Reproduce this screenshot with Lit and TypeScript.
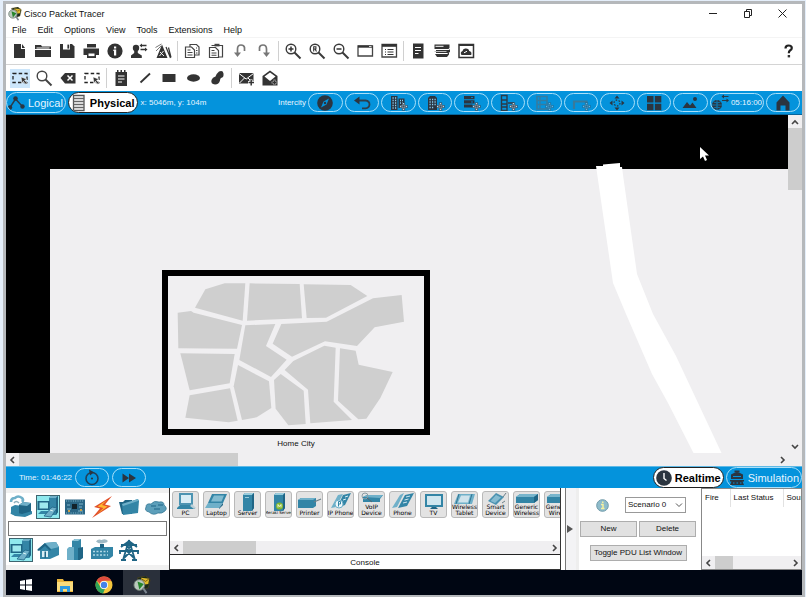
import { LitElement, html, svg, css, type TemplateResult } from "lit";
import { customElement, property } from "lit/decorators.js";
import { classMap } from "lit/directives/class-map.js";

type Art = TemplateResult;

const plus = svg`<path d="M13.500 15.500h8M17.500 11.500v8" stroke="#3b4652" stroke-width="3.200"/><path d="M14 15.500h7M17.500 12v7" stroke="#b5dcf2" stroke-width="1.500"/><path d="M15 15.500h5M17.500 13v5" stroke="#3b4652" stroke-width=".7"/>`;

/* Toolbar glyphs, 24 x 24 */
const glyphs: Record<string, Art> = {
  file: svg`<path d="M7 5h7v5h4v9H7z"/><path d="M15 5l3 4h-3z"/>`,
  folder: svg`<path d="M4 6h6l1 1.500h9V10H4z"/><path d="M5.500 9h13" stroke="#fff" stroke-width="1"/><path d="M4 11h16v7H4z"/>`,
  save: svg`<path d="M5 5h12l2.500 2.500V19H5z"/><path d="M8 5h7v5.500H8z" fill="#fff"/><path d="M12.400 5.600h1.800v4h-1.800z"/>`,
  print: svg`<path d="M8 5h9v3.400H8zM4.500 9.500h15.500V16H4.500zM8 14h9v5H8z"/><path d="M9.500 14.500h6v2.600h-6z" fill="#fff"/>`,
  info: svg`<circle cx="12" cy="12" r="7.600"/><path d="M11 7.500h2.200v2H11zM10.600 10.600h2.600V16.600H11v-4.500h-.8z" fill="#fff"/>`,
  user: svg`<circle cx="9" cy="9" r="3.200"/><path d="M7.200 10h3.600v4l4 2.500V19H4v-2.500l3.200-2.500z"/><path d="M14.500 6.500h5M13.500 10.500h5" stroke="#333" stroke-width="1.300"/><path d="M12.500 6.500l2.500-2v4zM20.500 10.500l-2.500-2v4z"/>`,
  tower: svg`<path d="M11 5.500L16.500 19H5.500z"/><path d="M15 8l4.500 11M17.500 8.500l2.500 10" stroke="#333" stroke-width="1.200"/><path d="M4.500 8.500l6-3.500M5 12l5-5" stroke="#777" stroke-width="1"/><path d="M9 13l4 4M12.500 12l-4 5" stroke="#fff" stroke-width=".9"/>`,
  copy: svg`<g fill="#fff" stroke="#444" stroke-width="1.200"><path d="M10 5.500h6.500l2.500 2.500v8h-9z"/><path d="M5.500 8h6l3 3v7.500h-9z"/></g><path d="M7.500 11h3M7.500 13.500h5M7.500 16h5M16 9h1M16 11.500h1.500M16 14h1.500" stroke="#444" stroke-width="1.100"/>`,
  paste: svg`<g fill="#fff" stroke="#444" stroke-width="1.200"><path d="M7.500 6.500h11V18H9"/><path d="M5.500 8.500h6l3 3v7h-9z"/></g><path d="M10.500 4.800h5v2.600h-5z" fill="#444"/><path d="M7.500 11.500h3M7.500 14h5M7.500 16.300h5" stroke="#444" stroke-width="1.100"/>`,
  undo: svg`<path d="M16.500 12V8.500Q16 6 13 6Q9.500 6 9.500 10v5" fill="none" stroke="#777" stroke-width="1.700"/><path d="M6 13.500h7L9.500 18z" fill="#777"/>`,
  redo: svg`<path d="M7.500 12V8.500Q8 6 11 6Q14.500 6 14.500 10v5" fill="none" stroke="#777" stroke-width="1.700"/><path d="M18 13.500h-7l3.500 4.500z" fill="#777"/>`,
  zoomIn: svg`<circle cx="10" cy="10" r="4.800" fill="none" stroke="#3a3a3a" stroke-width="1.400"/><path d="M13.500 13.500l6 6" stroke="#3a3a3a" stroke-width="2"/><path d="M7.500 10h5M10 7.500v5" stroke="#333" stroke-width="1.500"/>`,
  zoomReset: svg`<circle cx="10" cy="10" r="4.800" fill="none" stroke="#3a3a3a" stroke-width="1.400"/><path d="M13.500 13.500l6 6" stroke="#3a3a3a" stroke-width="2"/><path d="M8.700 12.600V7.800h2.200v2.200H8.700M10 10l1.500 2.600" fill="none" stroke="#333" stroke-width="1.100"/>`,
  zoomOut: svg`<circle cx="10" cy="10" r="4.800" fill="none" stroke="#3a3a3a" stroke-width="1.400"/><path d="M13.500 13.500l6 6" stroke="#3a3a3a" stroke-width="2"/><path d="M7.500 10h5" stroke="#333" stroke-width="1.500"/>`,
  window: svg`<path d="M5 7h14.500v10H5z" fill="#fff" stroke="#444" stroke-width="1.300"/><path d="M5 6.500h14.500v2.200H5z"/><path d="M16 7.500h2.500" stroke="#fff" stroke-width=".8"/>`,
  list: svg`<path d="M5 5.500h14.500V18H5z" fill="#fff" stroke="#444" stroke-width="1.300"/><path d="M5 5h14.500v2.800H5z"/><path d="M8 10.500h1M10.500 10.500h6M8 13h1M10.500 13h6M8 15.500h1M10.500 15.500h6" stroke="#333" stroke-width="1.200"/>`,
  doc: svg`<path d="M7 4.500h10.500v15H7z"/><path d="M9 8.500h6M9 11.500h6M9 14.500h3.500" stroke="#fff" stroke-width="1.200"/>`,
  stack: svg`<path d="M4.500 5.500h15V9l-1 1h-14zM6 11h13l1-1v3l-2 1H6zM5 15h12l2-1.500v2L17 18H7z"/><path d="M5.500 7.300h8" stroke="#fff" stroke-width="1"/><path d="M4.500 12.500h12" stroke="#bbb" stroke-width="1"/>`,
  cloud: svg`<path d="M5 5.500h14.500v13H5z" fill="#fff" stroke="#333" stroke-width="1.500"/><path d="M5 5h14.500v2H5z"/><path d="M7.500 16q-1.800-2.800 1-4q.5-3 3.500-2.500q3 .2 3.200 2.500q3 .7 2 4z"/><path d="M10 13.800l3-1.500" stroke="#fff" stroke-width="1"/>`,
  marquee: svg`<path d="M5 7.500h14v9H5z" fill="none" stroke="#222" stroke-width="1.300" stroke-dasharray="3.500 2.200"/><path d="M13 11l6 2.200-2.400 1.100 2.600 3-1.300 1-2.500-3-1.300 2z" stroke="#fff" stroke-width=".5"/>`,
  lens: svg`<circle cx="10" cy="10" r="4.800" fill="none" stroke="#444" stroke-width="1.400"/><path d="M13.500 13.500l6 6" stroke="#444" stroke-width="2"/>`,
  erase: svg`<path d="M4.500 12L9 7h10.500v10.500H9z"/><path d="M11.500 9.500l5 5M16.500 9.500l-5 5" stroke="#fff" stroke-width="1.500"/>`,
  note: svg`<path d="M6.500 6h11.500v14H6.500zM8 4h1.500v3H8zM11.500 4H13v3h-1.500zM15 4h1.500v3H15z"/><path d="M9 10h6.500M9 13h6.500M9 16h4" stroke="#fff" stroke-width="1.200"/>`,
  line: svg`<path d="M7.500 16.500L17 7.500" stroke="#333" stroke-width="1.800"/>`,
  rect: svg`<path d="M5.500 8h13v8h-13z"/>`,
  ellipse: svg`<ellipse cx="12.500" cy="12" rx="6.500" ry="3.700"/>`,
  blob: svg`<path d="M14 5.500q4-1.500 4.500 2q.5 4-2.500 4.500q-1 .5-1 2.500q-1 4-5 4q-4.500-.5-3.500-4.500q1-3 4-3.500q1.500-3.500 3.500-5z"/>`,
  mail: svg`<path d="M5 7h14.500v10.500H5z"/><path d="M5 7.500l7.200 5.500 7.300-5.500M5.500 17l5-5M19 17l-5-5" stroke="#fff" stroke-width="1" fill="none"/><path d="M14 16.500h6M17 13.500v6" stroke="#fff" stroke-width="3.200"/><path d="M14.500 16.500h5.500M17.200 14v5.500" stroke="#333" stroke-width="1.500"/>`,
  mailOpen: svg`<path d="M4.500 10L12 4.500 19.500 10v9.500h-15z"/><path d="M6.500 10.500L12 6.500l5.500 4-5.500 4.500z" fill="#fff"/><path d="M13.500 16.500h6M16.500 13.500v6" stroke="#999" stroke-width="2.200"/><path d="M14.500 16.500h4M16.500 14.500v4" stroke="#333" stroke-width="1"/>`,
  help: svg`<path d="M9.500 9.500Q9.500 6.500 12.500 6.500Q15.800 6.500 15.800 9Q15.800 10.500 14 11.500Q12.800 12.300 12.800 14.200" fill="none" stroke="#222" stroke-width="2.200"/><path d="M11.700 16h2.400v2.400h-2.400z"/>`,

  compass: svg`<circle cx="12" cy="12" r="7.800"/><path d="M16 7.500l-2.500 6-5.500 3 2.500-6z" fill="#0493dc"/><circle cx="12" cy="12" r="1.200"/>`,
  back: svg`<path d="M7 9.500h8.500q4 .3 4 4q-.2 3.500-4 3.800h-3.500" fill="none" stroke="#2c3e4c" stroke-width="1.800"/><path d="M4 9.500L9.500 5.500v8z"/>`,
  city: svg`<path d="M5 5h6.500v14H5zM12.500 7.500h6V17h-6z"/><path d="M6.500 7h1.200M9 7h1.200M6.500 9.500h1.200M9 9.500h1.200M6.500 12h1.200M9 12h1.200M6.500 14.500h1.200M9 14.500h1.200M14 9.500h1M16 9.500h1M14 12h1M16 12h1M6.500 17h1.200M9 17h1.200" stroke="#8dcdf0" stroke-width="1.500"/>${plus}`,
  building: svg`<path d="M5 7l2-2h5l2 2v12H5z"/><path d="M6.500 8.500h1.200M9 8.500h1.200M11.500 8.500h1.200M6.500 11h1.200M9 11h1.200M11.500 11h1.200M6.500 13.500h1.200M9 13.500h1.200M11.500 13.500h1.200M6.500 16.500h1.200M9 16.500h1.200" stroke="#8dcdf0" stroke-width="1.400"/>${plus}`,
  closet: svg`<path d="M5 5h10.500v3.200H5zM5 9.300h10.500v3.200H5zM5 13.600h8.500v3H5z"/><path d="M12 6.500h2M12 11h2" stroke="#0493dc" stroke-width=".8"/>${plus}`,
  rack: svg`<path d="M5.500 4.500h5.500v15H5.500z" fill="none" stroke="#2b3b48" stroke-width="1.400"/><path d="M5.500 9h5.500M5.500 13h5.500M5.500 16h5.500M12 12h6" stroke="#2b3b48" stroke-width="1.300"/>${plus}`,
  rackDim: svg`<g opacity=".5"><path d="M5 5.500h10V18H5z" fill="none" stroke="#666" stroke-width="1.600"/><path d="M5 9.500h10M5 13.500h10M8 5.500V18" stroke="#666" stroke-width="1.300"/>${plus}</g>`,
  tableDim: svg`<g opacity=".55"><path d="M5 18V10.500h12.500V14" fill="none" stroke="#666" stroke-width="2.200"/>${plus}</g>`,
  move: svg`<path d="M12 4.500l2.500 3h-5zM12 19.500l2.500-3h-5zM4.500 12l3-2.500v5zM19.500 12l-3-2.500v5z"/><circle cx="12" cy="12" r="3" fill="none" stroke="#2b3b48" stroke-width="1.300" stroke-dasharray="1.600 1.500"/>`,
  grid: svg`<path d="M5 5h6.500v6.500H5zM12.800 5h6.500v6.500h-6.500zM5 12.800h6.500v6.500H5zM12.800 12.800h6.500v6.500h-6.500z"/>`,
  scene: svg`<path d="M4.500 17l4.500-6 3 3.500 2.500-3 4 5.500z"/><circle cx="17" cy="8" r="2"/>`,
  globe: svg`<circle cx="8" cy="14" r="5"/><path d="M3 14h10M8 9v10M4.500 11q3.500 2 7 0M4.500 17q3.500-2 7 0" stroke="#0493dc" stroke-width=".7" fill="none"/><path d="M14 5.500h5.500M13 9.500h5.500" stroke="#2b3b48" stroke-width="1.200"/><path d="M12.500 5.500L15 3.500v4zM20 9.500l-2.500-2v4z"/>`,
  home: svg`<path d="M5.500 11.500L12 4.500l6.500 7V19.500H14.500v-5h-5v5H5.500z"/>`,
  logical: svg`<path d="M5 16.500L10.500 8 17 15" fill="none" stroke="#2b3b48" stroke-width="1.400"/><circle cx="5" cy="16.500" r="2.200"/><circle cx="10.500" cy="7.500" r="2.300"/><circle cx="17.500" cy="15.500" r="2.200"/>`,
  physical: svg`<path d="M6.500 4.500h10.500v15H6.500z" fill="#fff" stroke="#555" stroke-width="1.300"/><path d="M6.500 7.500h10.500M6.500 10.500h10.500M6.500 13.500h10.500M6.500 16.500h10.500" stroke="#666" stroke-width="1.300"/>`,
  reset: svg`<circle cx="12" cy="12.500" r="6" fill="none" stroke="#20405a" stroke-width="1.600"/><path d="M9 3.500l5 2.700-4 3.300z"/><circle cx="12" cy="12.500" r="1.100"/>`,
  forward: svg`<path d="M5.500 7.500l6.500 4.500-6.500 4.500zM12 7.500l7 4.500-7 4.500z"/>`,
  clock: svg`<circle cx="12" cy="12" r="7.800"/><path d="M12 7v5.500l2.500 2" fill="none" stroke="#fff" stroke-width="1.400"/>`,
  sim: svg`<path d="M9.500 4.500h5v2h-5zM6 8.500Q12 4.500 18 8.500V13H6zM5 14h14v1.500H5zM6.500 15.500h11l1.500 3.500H5z"/><path d="M8 10.500h8M8 17h1.500M11.500 17H13M15 17h1.500" stroke="#0493dc" stroke-width="1.100"/>`,
};

const B = "#3385a6";
const L = "#6fb0c9";
const D = "#1f6585";

/* Device drawings, 24 x 24 */
const devices: Record<string, Art> = {
  network: svg`<path d="M2 12l4-2 7 1v8l-4 2-7-2z" fill="${B}"/><path d="M10 10l4-3 8 1v9l-4 4-8-1z" fill="${D}"/><path d="M10 10l4-3 8 1-4 3z" fill="${L}"/><path d="M2 7q0-4 4-4q3-3 7 0q2 2 0 4" fill="none" stroke="${L}" stroke-width="2.600"/><path d="M5 8q2-3 5 0" fill="none" stroke="#8fb0bd" stroke-width="1.500"/><path d="M1 18l5 3 10 1 7-3v-3l-10 3-8-2z" fill="${B}"/>`,
  end: svg`<path d="M13 3l2-2h7v16l-2 3h-7z" fill="${B}"/><path d="M13 3l2-2h7l-2 2z" fill="${L}"/><path d="M20 3l2-2v16l-2 3z" fill="${D}"/><path d="M1.500 6h12v9h-12z" fill="${D}"/><path d="M3.500 7.500h8.500v6H3.500z" fill="#9ee9ee"/><path d="M2 19l3-3h8l-1 3z" fill="${B}"/><path d="M8 21l8-9 5 1-6 9z" fill="${L}" stroke="${D}" stroke-width=".8"/><path d="M14 15l3 1" stroke="#d8f5f7"/>`,
  board: svg`<path d="M2 4.500h20v15H2z" fill="#2a6584"/><path d="M3 6h18M3 18h18" stroke="#86bed2" stroke-width="1" stroke-dasharray="1 1.300"/><path d="M9 9h5v5H9z" fill="#12222b"/><path d="M16 9h4M16 12h3M4 10h3M4 14h4M15 16h5" stroke="#7fb6cb" stroke-width="1"/><path d="M5 15h2v2H5zM17 14h2v2h-2z" fill="#c9a04a"/>`,
  bolt: svg`<path d="M22 1L4 12l6 1.500L2 23l19-12-6-1.500z" fill="#e2502a"/><path d="M17 5L7.500 11.500l6 1.500L7 19l10.500-7.500-5.500-1.500z" fill="#ffb52d"/>`,
  folder: svg`<path d="M2 7h4l2-2h7v14H5z" fill="${D}"/><path d="M5 9L21 4l1 2-1 12-15 2z" fill="${B}"/><path d="M5 9L21 4v2L6 11z" fill="${L}"/>`,
  cloud: svg`<path d="M5 17q-5-1-3-5q0-4 5-3q3-4 8-2q5-1 5 3q4 3 1 6q-3 3-7 2q-5 3-9-1z" fill="#5d9fba" stroke="${D}" stroke-width=".6"/><path d="M7 11h5M10 14h6M14 10h5" stroke="${D}" stroke-width="1.200"/>`,
  house: svg`<path d="M2 11l7-6 11-1 3 5v8l-9 4H4v-9z" fill="${B}"/><path d="M1 12l8-7 6 6-1 2-5-5-6 5z" fill="${D}"/><path d="M6 13h6v6H6z" fill="#d8eef5"/><path d="M8.500 13.500h1.500V20H8.500z" fill="${D}"/><path d="M9 5l11-1 3 5-8 2z" fill="${L}"/>`,
  tower: svg`<path d="M9 3l3-2h6v19l-3 2H9z" fill="${B}"/><path d="M4 11l2-2h5v13H4z" fill="${L}"/><path d="M9 3l3-2h6l-3 2z" fill="#8cc4d8"/><path d="M15 10l5-1v11l-3 2h-2z" fill="${D}"/>`,
  factory: svg`<path d="M1 11l4-2h18v9l-4 3H1z" fill="${B}"/><path d="M3 13.500h15M3 17h15" stroke="#b3dae7" stroke-width="1.700" stroke-dasharray="2 1.500"/><path d="M10 6h4v4h-4z" fill="${D}"/><path d="M6 3.500q2-3 5.500-1.500q4-2 6.500 1q-1 2-4 2q-5 1.500-8-1.500z" fill="#9fb9c4"/>`,
  pylon: svg`<g fill="none" stroke="${D}" stroke-width="1.800"><path d="M12 2L6 22M12 2l6 20M4 7h16M2 13h20M4 9l8-6 8 6M9 12l8 8M15 12l-8 8M9 7l5 5M15 7l-5 5M3 16v-3M21 16v-3"/><path d="M4 22h5M15 22h5"/></g>`,
  pc: svg`<path d="M5 1h14v12H5z" fill="#4d94b2"/><path d="M7 3h10v8H7z" fill="#d9edf5"/><path d="M3 16l3-3h12l3 3v1H3z" fill="${B}"/><path d="M18 12l4 4-2 1-4-3z" fill="#bccfd7"/>`,
  laptop: svg`<path d="M7 2h15l-4 9H3z" fill="${B}"/><path d="M9 3.500h10l-2.500 6H6z" fill="#82bbd0"/><path d="M3 11h15l-4 5H0z" fill="${L}"/><path d="M14 16l4-5v2l-4 4z" fill="${D}"/>`,
  server: svg`<path d="M7 3l2-2h9v15l-2 3H7z" fill="${B}"/><path d="M7 3l2-2h9l-2 2z" fill="#9accdc"/><path d="M16 3l2-2v15l-2 3z" fill="${D}"/><path d="M9 5.500h4" stroke="#9accdc"/>`,
  meraki: svg`<path d="M7 3l2-2h9v15l-2 3H7z" fill="${B}"/><path d="M7 3l2-2h9l-2 2z" fill="#9accdc"/><path d="M16 3l2-2v15l-2 3z" fill="${D}"/><circle cx="12.500" cy="14" r="3.500" fill="#85b92c"/><path d="M11 15.500v-3l1.500 2 1.500-2v3" fill="none" stroke="#fff" stroke-width=".8"/>`,
  printer: svg`<path d="M0 8l3-2h15v8l-3 2H0z" fill="${B}"/><path d="M0 8l3-2h15l-3 2z" fill="${L}"/><path d="M16 10l7-3" stroke="#6c7e88" stroke-width="1.200"/>`,
  ipphone: svg`<path d="M9 3l5-1-7 13-5 1z" fill="${L}"/><path d="M14 3l8-2-6 12-8 3z" fill="${B}"/><path d="M16 5l3-1M14 8l3-1" stroke="#d9edf5"/><circle cx="10" cy="12" r="4" fill="#eef7fb" stroke="${L}"/><path d="M9.500 14.500v-5h2v2.500h-2" fill="none" stroke="${B}" stroke-width="1"/>`,
  voip: svg`<path d="M3 5l4-2h16l-3 4v3H3z" fill="${B}"/><path d="M3 5l4-2h16l-3 3z" fill="${L}"/><circle cx="5" cy="4" r="3" fill="none" stroke="#8b9ba3" stroke-width="1"/><path d="M7 6l5 4" stroke="#55656d" stroke-width="1"/>`,
  phone: svg`<path d="M9 3l4-2-7 14-5 1z" fill="${L}"/><path d="M14 3l9-2-7 13-9 2z" fill="${B}"/><path d="M15 5l4-1M13.500 8l4-1M12 11l4-1" stroke="#cfe6ef" stroke-width="1"/>`,
  tv: svg`<path d="M3 2h18v13H3z" fill="${B}"/><path d="M5 4h14v9H5z" fill="#cfe6ef"/><path d="M8 17l2-2h4l2 2z" fill="${D}"/>`,
  tablet: svg`<path d="M5 2h17l-3 10H1z" fill="${L}"/><path d="M8 3.500h9l-2 7H5z" fill="#cfe3ec"/><path d="M6 2l-3 10M19 2l-3 10" stroke="${D}" stroke-width=".8"/>`,
  smart: svg`<path d="M12 1l8 4-8 8-8-4z" fill="#4b92b0"/><path d="M12 3l5 2.500-6 5.500-4.500-2z" fill="#85bbd0"/><path d="M19 5l3-4M18 11l3-2" stroke="#6c7e88"/>`,
  generic: svg`<path d="M1 5l4-3h18v6l-4 3H1z" fill="${B}"/><path d="M1 5l4-3h18l-4 3z" fill="#78b5cc"/><path d="M19 5l4-3v6l-4 3z" fill="${D}"/>`,
};

interface Kind { art: string; label: string[]; tight?: boolean }
const kinds: Kind[] = [
  { art: "pc", label: ["PC"] },
  { art: "laptop", label: ["Laptop"] },
  { art: "server", label: ["Server"] },
  { art: "meraki", label: ["Meraki Server"], tight: true },
  { art: "printer", label: ["Printer"] },
  { art: "ipphone", label: ["IP Phone"] },
  { art: "voip", label: ["VoIP", "Device"] },
  { art: "phone", label: ["Phone"] },
  { art: "tv", label: ["TV"] },
  { art: "tablet", label: ["Wireless", "Tablet"] },
  { art: "smart", label: ["Smart", "Device"] },
  { art: "generic", label: ["Generic", "Wireless"] },
  { art: "generic", label: ["Generic", "Wired"] },
];

const blocks = [
  "121,142 152,87 210,69 272,69 264,181",
  "285,69 435,71 442,174 277,181",
  "447,72 588,74 638,107 514,172 456,173",
  "69,157 109,152 117,157 262,194 247,265 71,264",
  "77,279 240,281 225,369 105,390",
  "105,405 226,384 249,481 222,486 92,472",
  "272,195 362,191 334,257 396,298 349,350 254,299",
  "250,314 343,363 350,443 306,471 262,479 237,378",
  "380,191 516,184 655,114 741,104 748,184 660,201 607,257 511,243 412,289 354,250",
  "378,341 447,391 453,491 401,495 363,445 358,359",
  "390,329 416,302 509,256 543,262 537,424 592,479 467,489 460,388",
  "556,264 603,271 612,313 714,335 677,413 635,475 611,477 550,421",
];

const glyph = (name: string) =>
  html`<svg class="glyph" viewBox="0 0 24 24" aria-hidden="true">${glyphs[name]}</svg>`;
/* Same drawing with its margin trimmed, for the rounded bar buttons */
const pillGlyph = (name: string) =>
  html`<svg class="glyph" viewBox="2 2 20 20" aria-hidden="true">${glyphs[name]}</svg>`;
const device = (name: string) =>
  html`<svg class="device" viewBox="0 0 24 24" aria-hidden="true">${devices[name]}</svg>`;

const base = css`
  * { box-sizing: border-box; }
  button { font: inherit; color: inherit; background: none; border: 0; padding: 0; margin: 0; }
  svg { display: block; flex: none; }
`;

@customElement("pt-scrollbar")
export class PtScrollbar extends LitElement {
  @property({ type: Boolean, reflect: true }) vertical = false;
  @property({ type: Number }) size = 20;

  static styles = [base, css`
    :host { display: flex; background: #f0eff1; height: 13px; min-width: 0; }
    :host([vertical]) { flex-direction: column; width: 14px; height: auto; min-height: 0; }
    .arrow { flex: none; width: 13px; height: 13px; display: grid; place-items: center; }
    .track { flex: 1; min-width: 0; min-height: 0; }
    .thumb { background: #cdcdcd; width: 100%; height: 100%; }
  `];

  render() {
    const [a, b] = this.vertical
      ? ["M1 6l3-3 3 3", "M1 2l3 3 3-3"]
      : ["M5 1L2 4l3 3", "M3 1l3 3-3 3"];
    const arrow = (d: string, name: string) => html`
      <button class="arrow" aria-label=${name}>
        <svg width="8" height="8" viewBox="0 0 8 8"><path d=${d} fill="none" stroke="#444" stroke-width="1.600"/></svg>
      </button>`;
    const extent = this.vertical ? `height:${this.size}%` : `width:${this.size}%`;
    return html`${arrow(a, "Scroll back")}
      <div class="track"><div class="thumb" style=${extent}></div></div>
      ${arrow(b, "Scroll forward")}`;
  }
}

@customElement("app-root")
export class AppRoot extends LitElement {
  static styles = [base, css`
    :host {
      display: flex; flex-direction: column; min-height: 100vh;
      font: 8px/12px "Liberation Sans", Arial, sans-serif; color: #111; background: #e4eefa;
      padding: 1px 1px 0 3px;
      box-sizing: border-box;
    }
    .frame {
      flex: 1; display: flex; flex-direction: column; background: #fff; min-width: 0;
      border: 3px solid #b5b8bb; border-bottom-width: 2px;
    }
    .glyph { width: 24px; height: 24px; fill: #333; }
    .device { width: 24px; height: 24px; }

    .title { display: flex; align-items: center; height: 19px; padding: 0 14px 0 2px; gap: 2px; }
    .title h1 { font-size: 9px; font-weight: 400; margin: 0; flex: 1; }
    .winbtns { display: flex; gap: 24px; }
    .winbtns button { width: 11px; height: 11px; }

    .menus { display: flex; height: 14px; padding-left: 6px; gap: 11px; }
    .menus button { height: 14px; font-size: 9px; line-height: 14px; }

    .tools { display: flex; align-items: center; height: 28px; border-bottom: 1px solid #d4d4d4; border-top: 1px solid #f4f4f4; padding: 0 2px 0 1px; }
    .tools.draw { height: 26px; border: 0; padding-left: 2px; }
    .tools button { width: 24px; height: 24px; }
    .tools .sep { width: 1px; height: 20px; margin: 0 2px; background: #d0d0d0; }
    .grow { flex: 1; }
    .on { background: linear-gradient(#cce6fb, #cce6fb) center / 20px 19px no-repeat; }

    .bar { display: flex; align-items: center; background: #0493dc; color: #e6f5ff; }
    .bar.top { height: 24px; border-bottom: 1px solid #07659c; }
    .bar.low { height: 22px; border-top: 1px solid #5fb9e6; justify-content: space-between; }
    .pill {
      height: 19px; border: 1px solid #a9e0fa; border-radius: 10px; display: flex; align-items: center;
      justify-content: center; overflow: hidden; white-space: nowrap;
    }
    .pill .glyph { height: 20px; width: 20px; fill: #2b3540; }
    .tabs { display: flex; gap: 2px; font-size: 11px; }
    .tabs .pill { height: 21px; padding-right: 2px; gap: 1px; border-radius: 11px; }
    .tabs .active { background: #fff; color: #000; font-weight: 700; border-color: #222; }
    .coords { flex: 1; padding-left: 3px; }
    .nav { display: flex; gap: 2px; width: 492px; margin: 0 2px; }
    .nav .pill { flex: 1; }
    .nav .pill.time { flex: 0 0 54px; }
    .clock { display: flex; align-items: center; gap: 3px; padding-left: 13px; }
    .clock .pill { width: 34px; }

    .stage { flex: 1; display: grid; grid-template-columns: 1fr 14px; grid-template-rows: 1fr 13px; min-height: 338px; background: #f0eff1; }
    .map { position: relative; overflow: hidden; background: #000; min-width: 0; }
    .land { position: absolute; inset: 0; width: 100%; height: 100%; }
    .city { position: absolute; left: 156px; top: 155px; width: 268px; margin: 0; text-align: center; }
    .city svg { width: 268px; height: 165px; border: 6px solid #000; background: #f0eff1; }
    .city figcaption { line-height: 18px; }

    .dock { display: flex; height: 82px; min-width: 0; background: #fff; }
    .groups { flex: none; width: 163px; background: #fff; border-top: 5px solid #f0f0f0; border-bottom: 5px solid #f0f0f0; padding: 2px 2px 0; display: flex; flex-direction: column; gap: 2px; }
    .row { display: flex; gap: 3px; padding-left: 1px; }
    .row button { width: 24px; height: 24px; }
    .row .picked { background: #8fe9ee; outline: 1px solid #3e6570; outline-offset: -1px; }
    .search { width: 100%; height: 15px; border: 1px solid #777; font: inherit; padding: 0 3px; background: #fff; }
    .shelf { flex: 1; min-width: 0; border: solid #333; border-width: 0 1px 1px; display: flex; flex-direction: column; }
    .tiles { flex: 1; display: flex; gap: 4px; padding: 3px 2px; overflow: hidden; }
    .tile {
      flex: none; width: 27px; height: 27px; border: 1px solid #b9b9b9; border-radius: 3px; background: #e3e3e3; position: relative;
      font: 6px/6px "DejaVu Sans", Verdana, sans-serif; color: #000; display: flex; justify-content: center; overflow: hidden;
    }
    .tile .cap { position: absolute; inset: auto -8px 1px; text-align: center; white-space: nowrap; }
    .tile .cap i { display: block; font-style: normal; line-height: 6px; }
    .tile .tight { font-size: 4px; }
    .console { height: 15px; border-top: 1px solid #222; line-height: 15px; text-align: center; display: block; }
    .split { flex: none; width: 14px; margin-left: 4px; border-left: 1px solid #777; border-right: 3px solid #eee; background: #f3f3f5; display: grid; align-items: center; justify-items: start; }
    .scen { flex: none; width: 122px; padding: 9px 5px 0 1px; display: flex; flex-direction: column; align-items: center; gap: 8px; }
    .pick { display: flex; align-items: center; gap: 16px; align-self: flex-end; padding-right: 10px; }
    .selwrap { position: relative; }
    .selwrap svg { position: absolute; right: 3px; top: 4px; pointer-events: none; }
    select { appearance: none; width: 61px; height: 16px; border: 1px solid #999; background: #fff; font: inherit; color: inherit; padding: 0 2px; border-radius: 0; display: block; }
    .pair { display: flex; gap: 2px; width: 100%; }
    .btn { background: #e1e1e1; border: 1px solid #adadad; height: 16px; flex: 1; white-space: nowrap; }
    .btn.wide { flex: none; width: 97px; }
    .pdu { flex: none; width: 101px; border: solid #888; border-width: 1px; display: flex; flex-direction: column; justify-content: space-between; overflow: hidden; }
    .pdu table { width: 142px; border-collapse: collapse; table-layout: fixed; }
    .pdu th { font-weight: 400; text-align: left; height: 18px; padding: 0 0 0 3px; border-right: 1px solid #e2e2e2; white-space: nowrap; }

    .task { display: flex; height: 25px; background: #000613; }
    .task button { width: 39px; padding-top: 4px; display: grid; place-items: center; }
    .task .live { background: #2a303b; width: 37px; }
  `];

  private tool(name: string, label: string, on = false) {
    return html`<button aria-label=${label} class=${classMap({ on })}>${glyph(name)}</button>`;
  }

  private tools(list: string[]) {
    return list.map((n) => (n === "|" ? html`<span class="sep"></span>` : this.tool(n, n)));
  }

  private logo(size: number) {
    return html`<svg width=${size} height=${size} viewBox="0 0 20 20" aria-hidden="true">
      <path d="M5 2l9-2 5 4-2 9-6 2z" fill="#1a2a1c" stroke="#5b4a18" stroke-width=".6"/>
      <path d="M9 2l9 1-1 6-8 1z" fill="#e2bc2b"/><path d="M9 3l5 3 4-3" fill="none" stroke="#6b5415"/>
      <circle cx="7" cy="10" r="6" fill="#b9c8bd" stroke="#68746d"/>
      <path d="M5 6l7 3-5 6z" fill="#25852b"/><path d="M11 13l4 6" stroke="#7b858f" stroke-width="2.200"/>
    </svg>`;
  }

  render() {
    const nav = ["compass", "back", "city", "building", "closet", "rack", "rackDim", "tableDim", "move", "grid", "scene"];
    return html`<div class="frame">
      <header class="title">
        ${this.logo(14)}
        <h1>Cisco Packet Tracer</h1>
        <div class="winbtns">
          <button aria-label="Minimize"><svg width="11" height="11" viewBox="0 0 11 11"><path d="M2 5.500h8" stroke="#222"/></svg></button>
          <button aria-label="Restore"><svg width="11" height="11" viewBox="0 0 11 11"><path d="M2.500 3.500h5v6h-5zM4.500 3V1.500h5v6H8" fill="none" stroke="#222"/></svg></button>
          <button aria-label="Close"><svg width="11" height="11" viewBox="0 0 11 11"><path d="M1.500 1.500l8 8M9.500 1.500l-8 8" stroke="#222"/></svg></button>
        </div>
      </header>
      <nav class="menus">
        ${["File", "Edit", "Options", "View", "Tools", "Extensions", "Help"].map((m) => html`<button>${m}</button>`)}
      </nav>
      <div class="tools">
        ${this.tools(["file", "folder", "save", "print", "info", "user", "tower", "|", "copy", "paste", "undo", "redo", "|",
          "zoomIn", "zoomReset", "zoomOut", "window", "list", "|", "doc", "stack", "cloud"])}
        <span class="grow"></span>
        ${this.tool("help", "Help")}
      </div>
      <div class="tools draw">
        ${this.tool("marquee", "Select", true)}
        ${this.tools(["lens", "erase", "marquee", "|", "note", "line", "rect", "ellipse", "blob", "|", "mail", "mailOpen"])}
      </div>

      <div class="bar top">
        <div class="tabs">
          <button class="pill">${pillGlyph("logical")}Logical</button>
          <button class="pill active">${pillGlyph("physical")}Physical</button>
        </div>
        <span class="coords">x: 5046m, y: 104m</span>
        <span>Intercity</span>
        <div class="nav">
          ${nav.map((n) => html`<button class="pill" aria-label=${n}>${pillGlyph(n)}</button>`)}
          <button class="pill time">${pillGlyph("globe")}05:16:00</button>
          <button class="pill" aria-label="Home">${pillGlyph("home")}</button>
        </div>
      </div>

      <main class="stage">
        <div class="map">
          <svg class="land" aria-hidden="true">
            <rect x="44" y="54" width="100%" height="100%" fill="#f0eff1"/>
            <path d="M590 51L597 51V49.500L614 48V52H616L617 60L631 159L647 199L670 241L716 339V400H720L688 339L662 288L646 259L620 199L607 168Z" fill="#fff"/>
            <path d="M694 32v12l3-2.500 2 4.500 2-1-2-4.500h4z" fill="#fff"/>
          </svg>
          <figure class="city">
            <svg viewBox="40 47 768 459" preserveAspectRatio="none" role="img" aria-label="Home City map">
              ${blocks.map((p) => svg`<polygon points=${p} fill="#cfcfcf"/>`)}
            </svg>
            <figcaption>Home City</figcaption>
          </figure>
        </div>
        <pt-scrollbar vertical .size=${20}></pt-scrollbar>
        <pt-scrollbar .size=${29}></pt-scrollbar>
      </main>

      <div class="bar low">
        <div class="clock">
          <span>Time: 01:46:22</span>
          <button class="pill" aria-label="Reset time">${pillGlyph("reset")}</button>
          <button class="pill" aria-label="Fast forward">${pillGlyph("forward")}</button>
        </div>
        <div class="tabs">
          <button class="pill active">${pillGlyph("clock")}Realtime</button>
          <button class="pill">${pillGlyph("sim")}Simulation</button>
        </div>
      </div>

      <section class="dock">
        <div class="groups">
          <div class="row">
            ${["network", "end", "board", "bolt", "folder", "cloud"].map((n) => html`
              <button aria-label=${n} class=${classMap({ picked: n === "end" })}>${device(n)}</button>`)}
          </div>
          <input class="search" type="text" aria-label="Search devices">
          <div class="row">
            ${["end", "house", "tower", "factory", "pylon"].map((n) => html`
              <button aria-label=${n} class=${classMap({ picked: n === "end" })}>${device(n)}</button>`)}
          </div>
        </div>
        <div class="shelf">
          <div class="tiles">
            ${kinds.map((k) => html`<button class="tile">${device(k.art)}
              <span class=${classMap({ cap: true, tight: !!k.tight })}>${k.label.map((l) => html`<i>${l}</i>`)}</span></button>`)}
          </div>
          <pt-scrollbar .size=${20}></pt-scrollbar>
          <button class="console">Console</button>
        </div>
        <button class="split" aria-label="Collapse panel">
          <svg width="8" height="8" viewBox="0 0 8 8"><path d="M1 0l6 4-6 4z" fill="#555"/></svg>
        </button>
        <div class="scen">
          <div class="pick">
            <svg width="13" height="13" viewBox="0 0 13 13" aria-hidden="true"><circle cx="6.500" cy="6.500" r="5.800" fill="#8fbccb" stroke="#6d99a8"/><path d="M5 5.500h2v4M5 9.500h3.500" fill="none" stroke="#f5f1a0" stroke-width="1.500"/><path d="M6 2.500h1.500V4H6z" fill="#f5f1a0"/></svg>
            <div class="selwrap">
              <select aria-label="Scenario"><option>Scenario 0</option></select>
              <svg width="8" height="8" viewBox="0 0 8 8" aria-hidden="true"><path d="M1 2.500l3 3 3-3" fill="none" stroke="#555"/></svg>
            </div>
          </div>
          <div class="pair"><button class="btn">New</button><button class="btn">Delete</button></div>
          <button class="btn wide">Toggle PDU List Window</button>
        </div>
        <div class="pdu">
          <table>
            <colgroup><col width="28"><col width="53"><col width="61"></colgroup>
            <thead><tr><th>Fire</th><th>Last Status</th><th>Source</th></tr></thead>
          </table>
          <pt-scrollbar .size=${24}></pt-scrollbar>
        </div>
      </section>

      <footer class="task">
        <button aria-label="Start"><svg width="14" height="14" viewBox="0 0 14 14"><path d="M1 3l5-1v4.600H1zM7 1.800L13 1v5.600H7zM1 7.500h5V12l-5-1zM7 7.500h6V13l-6-1z" fill="#fff"/></svg></button>
        <button aria-label="File Explorer"><svg width="18" height="16" viewBox="0 0 18 16"><path d="M1 2h6l1 2h9v11H1z" fill="#e9b43c"/><path d="M1 5h16v9H1z" fill="#fbdc7c"/><path d="M4 15V9h10v6h-3v-3H7v3z" fill="#2f9be0"/></svg></button>
        <button aria-label="Chrome"><svg width="18" height="18" viewBox="0 0 18 18"><circle cx="9" cy="9" r="8.500" fill="#f4c63d"/><path d="M9 .5a8.500 8.500 0 0 1 7.400 4.300H9a4.200 4.200 0 0 0-4 3L1.700 4.700A8.500 8.500 0 0 1 9 .5z" fill="#dd4b3e"/><path d="M1.700 4.700L5.400 11.100a4.200 4.200 0 0 0 4.500 2L8 17.400A8.500 8.500 0 0 1 1.700 4.700z" fill="#2da35a"/><circle cx="9" cy="9" r="4" fill="#fff"/><circle cx="9" cy="9" r="3.200" fill="#4382e8"/></svg></button>
        <button class="live" aria-label="Packet Tracer">${this.logo(18)}</button>
      </footer>
    </div>`;
  }
}
